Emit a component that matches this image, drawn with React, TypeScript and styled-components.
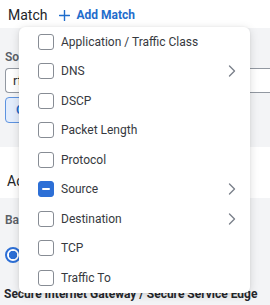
import { styled, createGlobalStyle } from "styled-components";

const GlobalStyle = createGlobalStyle`
    html, body {
        margin: 0;
        padding: 0;
        background: #ffffff;
        font-family: Roboto, "Noto Sans", sans-serif;
        overflow: hidden;
    }
`;

type MenuEntry = {
    label: string;
    state?: "checked" | "partial";
    submenu?: boolean;
};

const entries: MenuEntry[] = [
    { label: "Application / Traffic Class" },
    { label: "DNS", submenu: true },
    { label: "DSCP" },
    { label: "Packet Length" },
    { label: "Protocol" },
    { label: "Source", state: "partial", submenu: true },
    { label: "Destination", submenu: true },
    { label: "TCP" },
    { label: "Traffic To" },
];

const Chevron = () => (
    <svg width="8" height="12" viewBox="0 0 8 12" fill="none">
        <path d="M1.5 1L6.5 6L1.5 11" stroke="#7b818b" strokeWidth="1.4" strokeLinecap="round" strokeLinejoin="round" />
    </svg>
);

const PlusIcon = () => (
    <svg width="11" height="11" viewBox="0 0 11 11" fill="none">
        <path d="M5.5 0.5V10.5M0.5 5.5H10.5" stroke="#1f6dcc" strokeWidth="1.4" strokeLinecap="round" />
    </svg>
);

const App = () => {
    return (
        <Page>
            <GlobalStyle />
            <Header>
                <Title>Match</Title>
                <AddButton>
                    <PlusIcon />
                    Add Match
                </AddButton>
            </Header>
            <SourcePanel>
                <FieldLabel>Source</FieldLabel>
                <TextInput>rfc1918</TextInput>
                <OutlineButton>Clear</OutlineButton>
            </SourcePanel>
            <SectionTitle>Action</SectionTitle>
            <ActionPanel>
                <FieldLabel>Based on</FieldLabel>
                <Radio />
                <BoldText>Secure Internet Gateway / Secure Service Edge</BoldText>
            </ActionPanel>
            <Menu>
                {entries.map((e) => (
                    <MenuItem key={e.label}>
                        <Checkbox $state={e.state}>{e.state === "partial" && <Dash />}</Checkbox>
                        <ItemText>{e.label}</ItemText>
                        {e.submenu && <Chevron />}
                    </MenuItem>
                ))}
            </Menu>
        </Page>
    );
};

export default App;

const Page = styled.div`
    position: relative;
    width: 270px;
    height: 305px;
    overflow: hidden;
`;

const Header = styled.div`
    display: flex;
    align-items: center;
    height: 28px;
    padding: 2px 0 0 8px;
    box-sizing: border-box;
    gap: 12px;
`;

const Title = styled.span`
    font-size: 14px;
    font-weight: 400;
    color: #222428;
`;

const AddButton = styled.span`
    display: flex;
    align-items: center;
    gap: 6px;
    font-size: 12px;
    font-weight: 700;
    color: #1f6dcc;
`;

const SourcePanel = styled.div`
    display: flex;
    flex-direction: column;
    height: 119px;
    box-sizing: border-box;
    padding: 22px 0 0 5px;
    background: #f3f4f6;
`;

const FieldLabel = styled.div`
    font-size: 12px;
    line-height: 14px;
    font-weight: 600;
    color: #5b5f66;
`;

const TextInput = styled.div`
    margin-top: 4px;
    height: 25px;
    box-sizing: border-box;
    border: 1px solid #9298a1;
    border-right: none;
    border-radius: 4px 0 0 4px;
    background: #ffffff;
    padding-left: 7px;
    font-size: 13px;
    line-height: 23px;
    color: #2b2d31;
`;

const OutlineButton = styled.div`
    margin-top: 4px;
    width: 70px;
    height: 26px;
    box-sizing: border-box;
    border: 1px solid #5d93e0;
    border-radius: 4px;
    background: #e3edfc;
    padding-left: 10px;
    font-size: 13px;
    font-weight: 600;
    line-height: 24px;
    color: #1f6dcc;
`;

const SectionTitle = styled.div`
    height: 51px;
    box-sizing: border-box;
    padding: 24px 0 0 7px;
    font-size: 14px;
    line-height: 20px;
    font-weight: 400;
    color: #222428;
`;

const ActionPanel = styled.div`
    display: flex;
    flex-direction: column;
    height: 107px;
    box-sizing: border-box;
    padding: 15px 0 0 5px;
    background: #f3f4f6;
`;

const Radio = styled.span`
    margin-top: 20px;
    width: 16px;
    height: 16px;
    box-sizing: border-box;
    border: 2px solid #2d6fd6;
    border-radius: 50%;
    background: radial-gradient(circle, #2d6fd6 0 4px, #ffffff 4.5px);
`;

const BoldText = styled.div`
    margin-top: 23px;
    margin-left: -1px;
    font-size: 12px;
    line-height: 16px;
    font-weight: 700;
    color: #26282c;
    white-space: nowrap;
`;

const Menu = styled.div`
    position: absolute;
    left: 19px;
    top: 27px;
    width: 231px;
    background: #ffffff;
    border-radius: 6px;
    box-shadow: 0 2px 10px rgba(0, 0, 0, 0.14), 0 0 2px rgba(0, 0, 0, 0.08);
`;

const MenuItem = styled.div`
    display: flex;
    align-items: center;
    height: 29.5px;
    padding: 0 14px 0 19px;
`;

const Checkbox = styled.span<{ $state?: "checked" | "partial" }>`
    display: flex;
    align-items: center;
    justify-content: center;
    flex: none;
    width: 16px;
    height: 16px;
    box-sizing: border-box;
    border-radius: 3px;
    border: 1.5px solid ${(p) => (p.$state ? "#2d6fd6" : "#878c94")};
    background: ${(p) => (p.$state ? "#2d6fd6" : "#ffffff")};
`;

const Dash = styled.span`
    width: 8px;
    height: 2px;
    border-radius: 1px;
    background: #ffffff;
`;

const ItemText = styled.span`
    flex: 1;
    margin-left: 7px;
    font-size: 12px;
    color: #36393e;
`;
